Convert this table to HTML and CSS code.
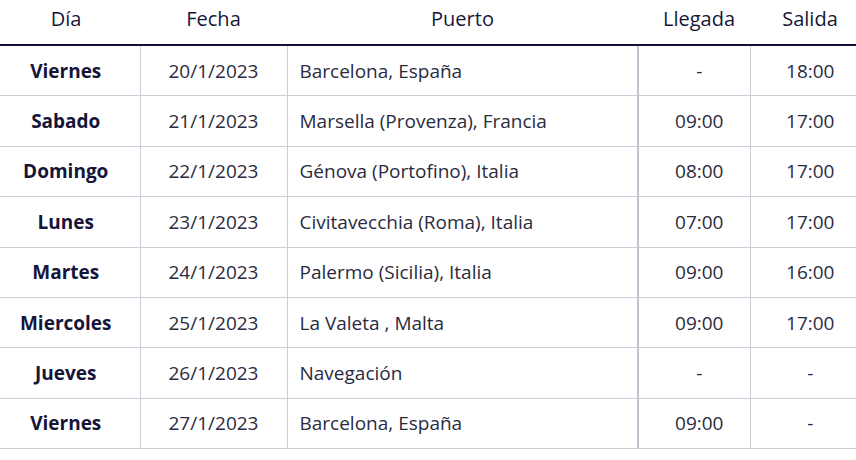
FILE: index.html
```html
<!DOCTYPE html>
<html lang="es">
<head>
<meta charset="utf-8">
<link rel="stylesheet" href="styles.css">
</head>
<body>
<table class="itin">
  <colgroup>
    <col class="c-dia"><col class="c-fecha"><col class="c-puerto"><col class="c-lleg"><col class="c-sal">
  </colgroup>
  <thead>
    <tr><th>Día</th><th>Fecha</th><th>Puerto</th><th class="lleg">Llegada</th><th class="sal">Salida</th></tr>
  </thead>
  <tbody>
    <tr><td class="dia">Viernes</td><td>20/1/2023</td><td class="puerto">Barcelona, España</td><td class="lleg">-</td><td class="sal">18:00</td></tr>
    <tr><td class="dia">Sabado</td><td>21/1/2023</td><td class="puerto">Marsella (Provenza), Francia</td><td class="lleg">09:00</td><td class="sal">17:00</td></tr>
    <tr><td class="dia">Domingo</td><td>22/1/2023</td><td class="puerto">Génova (Portofino), Italia</td><td class="lleg">08:00</td><td class="sal">17:00</td></tr>
    <tr><td class="dia">Lunes</td><td>23/1/2023</td><td class="puerto">Civitavecchia (Roma), Italia</td><td class="lleg">07:00</td><td class="sal">17:00</td></tr>
    <tr><td class="dia">Martes</td><td>24/1/2023</td><td class="puerto">Palermo (Sicilia), Italia</td><td class="lleg">09:00</td><td class="sal">16:00</td></tr>
    <tr><td class="dia">Miercoles</td><td>25/1/2023</td><td class="puerto">La Valeta , Malta</td><td class="lleg">09:00</td><td class="sal">17:00</td></tr>
    <tr><td class="dia">Jueves</td><td>26/1/2023</td><td class="puerto">Navegación</td><td class="lleg">-</td><td class="sal">-</td></tr>
    <tr><td class="dia">Viernes</td><td>27/1/2023</td><td class="puerto">Barcelona, España</td><td class="lleg">09:00</td><td class="sal">-</td></tr>
  </tbody>
</table>
</body>
</html>
```
FILE: styles.css
```css
html, body {
  margin: 0;
  padding: 0;
  background: #ffffff;
  overflow: hidden;
}
body {
  font-family: "Open Sans", "Noto Sans", sans-serif;
  font-size: 19px;
  color: #2b2b40;
}
.itin {
  border-collapse: collapse;
  table-layout: fixed;
  width: 878px;
  margin-left: -8px;
}
.c-dia { width: 148px; }
.c-fecha { width: 147px; }
.c-puerto { width: 351px; }
.c-lleg { width: 112px; }
.c-sal { width: 120px; }

.itin th {
  height: 45px;
  padding: 0 0 7px 0;
  box-sizing: border-box;
  font-size: 20px;
  font-weight: 400;
  color: #17173a;
  text-align: center;
  vertical-align: middle;
  border-bottom: 2px solid #10103a;
}
.itin td {
  height: 49.4px;
  padding: 0;
  text-align: center;
  vertical-align: middle;
  border-bottom: 1px solid #cfcdd9;
  border-left: 1px solid #cfcdd9;
}
.itin td:first-child { border-left: none; }
.itin .dia {
  font-weight: 700;
  color: #15153a;
}
.itin .puerto {
  text-align: left;
  padding-left: 12px;
}
.itin td.lleg {
  border-left: 2px solid #c4c2d0;
  padding-left: 10px;
}
.itin th.lleg { padding-left: 10px; }
```
